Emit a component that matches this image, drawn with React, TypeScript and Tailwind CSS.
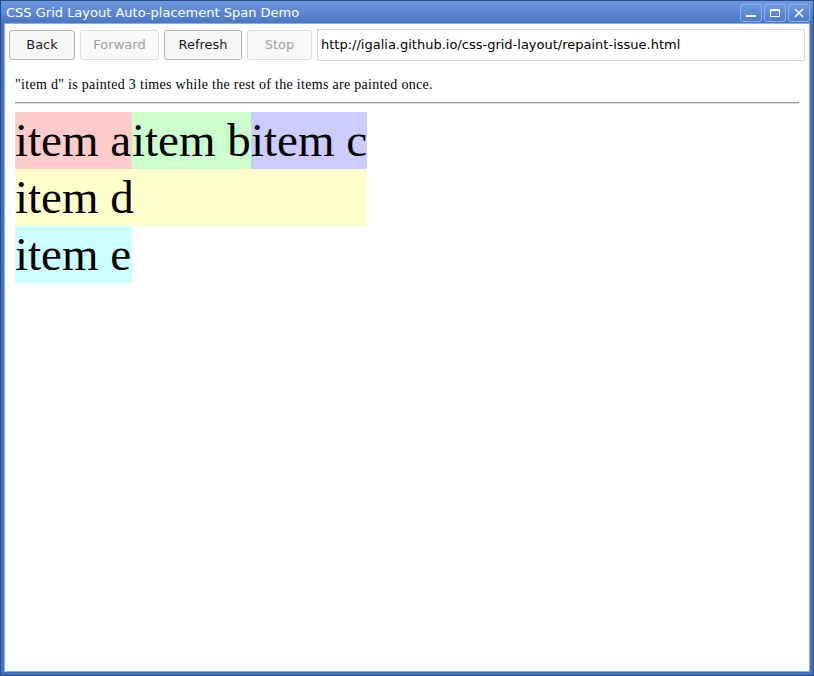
import React from 'react'

const ui = { fontFamily: '"DejaVu Sans", Verdana, sans-serif' }
const serif = { fontFamily: '"Liberation Serif", "Times New Roman", serif' }

function TitleButton({ children }: { children: React.ReactNode }) {
  return (
    <div className="w-[22px] h-[18px] rounded-[3px] border border-[#8fb0ea] bg-gradient-to-b from-[#6f98de] to-[#4f7bc9] flex items-center justify-center">
      {children}
    </div>
  )
}

function NavButton({ label, disabled, width }: { label: string; disabled?: boolean; width: string }) {
  return (
    <button
      className={
        'h-[30px] rounded-[3px] border text-[13px] ' +
        width +
        (disabled
          ? ' border-[#dcdcdc] bg-[#f9f9f9] text-[#a0a0a0]'
          : ' border-[#b4b4b4] bg-[#f7f7f7] text-[#1a1a1a]')
      }
      style={ui}
    >
      {label}
    </button>
  )
}

export default function App() {
  return (
    <div className="w-[814px] h-[676px] bg-[#4470be] border border-[#2b4a86] flex flex-col">
      {/* title bar */}
      <div className="h-[22px] flex items-center justify-between pl-[5px] pr-[3px] bg-gradient-to-b from-[#6e98df] to-[#4b76c3]">
        <span className="text-white text-[13px] leading-none" style={ui}>
          CSS Grid Layout Auto-placement Span Demo
        </span>
        <div className="flex gap-[2px] pt-[2px]">
          <TitleButton>
            <div className="w-[10px] h-[2px] bg-white mt-[6px]" />
          </TitleButton>
          <TitleButton>
            <div className="w-[10px] h-[8px] border border-white border-t-2 rounded-[1px]" />
          </TitleButton>
          <TitleButton>
            <svg width="10" height="10" viewBox="0 0 10 10">
              <path d="M1 1 L9 9 M9 1 L1 9" stroke="white" strokeWidth="1.5" />
            </svg>
          </TitleButton>
        </div>
      </div>

      {/* client area */}
      <div className="flex-1 mx-[3px] mb-[3px] border border-[#8eaee6] bg-white flex flex-col">
        <div className="flex items-center gap-[5px] pl-[4px] pr-[4px] pt-[5px] pb-[4px]">
          <NavButton label="Back" width="w-[66px]" />
          <NavButton label="Forward" disabled width="w-[79px]" />
          <NavButton label="Refresh" width="w-[78px]" />
          <NavButton label="Stop" disabled width="w-[65px]" />
          <div
            className="flex-1 h-[32px] border border-[#d6d6d6] bg-white flex items-center pl-[3px] text-[13px] text-black"
            style={ui}
          >
            http://igalia.github.io/css-grid-layout/repaint-issue.html
          </div>
        </div>

        <div className="px-[10px]" style={serif}>
          <p className="text-[14px] tracking-[0.3px] leading-[16px] text-black mt-[12px] mb-[9px]">
            "item d" is painted 3 times while the rest of the items are painted once.
          </p>
          <hr className="border-0 border-t border-b border-t-[#9a9a9a] border-b-[#e0e0e0] w-[784px]" />
          <div className="grid grid-cols-[117px_119px_116px] mt-[8px] text-[47px] leading-[57px] text-black w-max">
            <div className="h-[57px] bg-[#ffcccc] whitespace-nowrap">item a</div>
            <div className="h-[57px] bg-[#ccffcc] whitespace-nowrap">item b</div>
            <div className="h-[57px] bg-[#ccccff] whitespace-nowrap">item c</div>
            <div className="col-span-3 h-[57px] bg-[#ffffcc] whitespace-nowrap">item d</div>
            <div className="h-[57px] bg-[#ccffff] whitespace-nowrap">item e</div>
          </div>
        </div>
      </div>
    </div>
  )
}
